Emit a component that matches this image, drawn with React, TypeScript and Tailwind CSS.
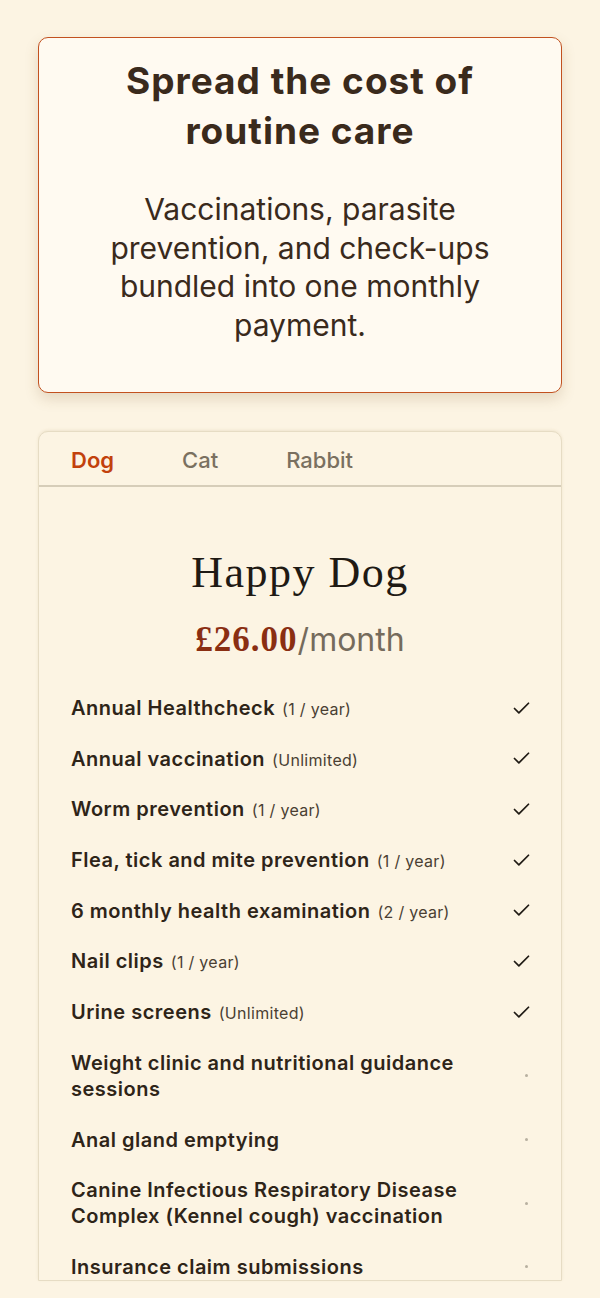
import { Check } from "lucide-react";

const features = [
  { name: "Annual Healthcheck", note: "(1 / year)", included: true },
  { name: "Annual vaccination", note: "(Unlimited)", included: true },
  { name: "Worm prevention", note: "(1 / year)", included: true },
  { name: "Flea, tick and mite prevention", note: "(1 / year)", included: true },
  { name: "6 monthly health examination", note: "(2 / year)", included: true },
  { name: "Nail clips", note: "(1 / year)", included: true },
  { name: "Urine screens", note: "(Unlimited)", included: true },
  { name: "Weight clinic and nutritional guidance sessions", included: false },
  { name: "Anal gland emptying", included: false },
  { name: "Canine Infectious Respiratory Disease Complex (Kennel cough) vaccination", included: false },
  { name: "Insurance claim submissions", included: false },
];

const tabs = ["Dog", "Cat", "Rabbit"];

export default function App() {
  return (
    <div className="min-h-screen bg-[#fcf4e3] px-[38px] pt-[37px] font-['Inter','Liberation_Sans',sans-serif] text-[#3a2a1c]">
      {/* Hero */}
      <div className="rounded-[10px] border-[1.5px] border-[#c2511f] bg-[#fffaf1] px-12 pt-[18px] pb-12 text-center shadow-[0_6px_14px_rgba(120,90,40,0.18)]">
        <h1 className="text-[37px] font-bold leading-[50px] tracking-[1px]">
          Spread the cost of routine care
        </h1>
        <p className="mt-[34px] text-[30px] leading-[38.5px]">
          Vaccinations, parasite prevention, and check-ups bundled into one monthly payment.
        </p>
      </div>

      {/* Plan card */}
      <div className="mt-[38px] rounded-t-[10px] border border-[#e6dcc4] bg-[#fcf4e3] shadow-[0_-1px_3px_rgba(150,120,60,0.12)]">
        <div className="flex h-[55px] items-center gap-[68px] border-b-2 border-[#d6cdb9] px-8 pt-1 text-[22px] font-medium">
          {tabs.map((t, i) => (
            <span key={t} className={i === 0 ? "font-semibold text-[#c2410c]" : "text-[#7a7060]"}>
              {t}
            </span>
          ))}
        </div>

        <div className="px-8 pt-[60px]">
          <h2 className="text-center font-['Liberation_Serif',serif] text-[44px] leading-[52px] tracking-[1.5px] text-[#1f1a14]">
            Happy Dog
          </h2>
          <p className="mt-[19px] flex items-baseline justify-center leading-[44px]">
            <span className="font-['Liberation_Serif',serif] text-[35px] font-bold tracking-[1px] text-[#8a2e12]">
              £26.00
            </span>
            <span className="text-[32px] text-[#756b5c]">/month</span>
          </p>

          <ul className="mt-[33px] flex flex-col gap-[24.7px]">
            {features.map((f) => (
              <li key={f.name} className="flex items-center justify-between gap-6">
                <span className="max-w-[420px] text-[20px] font-semibold leading-[26px] tracking-[0.5px] text-[#2e2418]">
                  {f.name}
                  {f.note && (
                    <span className="ml-[7px] text-[16px] leading-none font-normal tracking-[0.3px] text-[#4a3f33]">
                      {f.note}
                    </span>
                  )}
                </span>
                {f.included ? (
                  <Check className="-mr-[3px] h-[21px] w-[21px] shrink-0 text-[#1f1a14]" strokeWidth={2} />
                ) : (
                  <span className="mr-[1px] h-[3px] w-[3px] shrink-0 rounded-full bg-[#b8b0a0]" />
                )}
              </li>
            ))}
          </ul>
        </div>
      </div>
    </div>
  );
}
